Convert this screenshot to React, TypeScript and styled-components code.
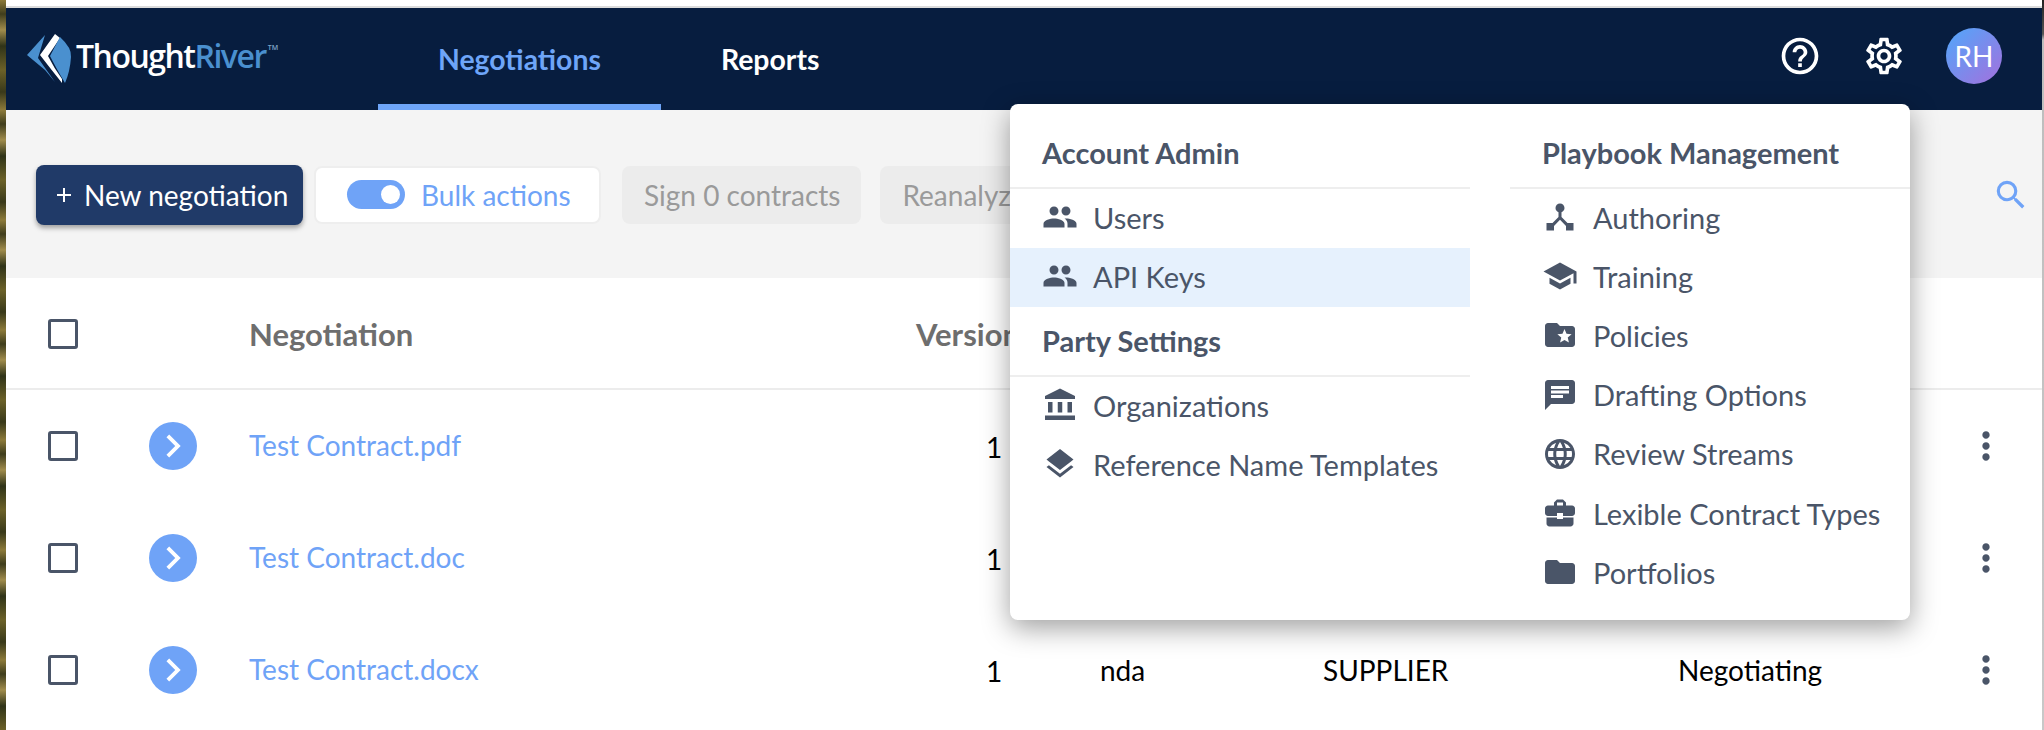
import styled, { createGlobalStyle } from 'styled-components';
import {
  MdAccountBalance,
  MdAdd,
  MdBusinessCenter,
  MdChat,
  MdChevronRight,
  MdDeviceHub,
  MdFolder,
  MdFolderSpecial,
  MdHelpOutline,
  MdLanguage,
  MdLayers,
  MdMoreVert,
  MdOutlineSettings,
  MdPeople,
  MdSchool,
  MdSearch,
} from 'react-icons/md';

const GlobalStyle = createGlobalStyle`
  html, body {
    margin: 0;
    padding: 0;
    background: #fff;
  }
  body {
    font-family: Lato, "Liberation Sans", sans-serif;
    font-size: 28px;
    color: #000;
  }
  * {
    box-sizing: border-box;
  }
`;

const Page = styled.div`
  position: relative;
  display: flex;
  width: 2044px;
  height: 730px;
  overflow: hidden;
`;

const Wallpaper = styled.div`
  flex: 0 0 6px;
  background: repeating-linear-gradient(
    180deg,
    #8c7a3a 0,
    #3f3d1c 14px,
    #a08c4c 30px,
    #2f3318 46px,
    #6b6128 70px,
    #39391a 92px,
    #8c7a3a 110px
  );
`;

const EdgeRight = styled.div`
  flex: 0 0 2px;
  background: linear-gradient(180deg, #222 0, #555 34px, #bdbdbd 40px, #c8c8c8 100%);
`;

const Shell = styled.div`
  flex: 1;
  display: flex;
  flex-direction: column;
  min-width: 0;
  background: #fff;
`;

const WindowTop = styled.div`
  flex: 0 0 8px;
  background: #fff;
  border-bottom: 2px solid #dcdcdc;
`;

const NavBar = styled.header`
  flex: 0 0 102px;
  display: flex;
  align-items: stretch;
  padding-left: 18px;
  background: #071d3f;
`;

const Logo = styled.div`
  flex: 0 0 354px;
  display: flex;
  align-items: flex-start;
  padding-top: 22px;

  svg {
    width: 50px;
    height: 56px;
    flex: none;
  }
`;

const LogoText = styled.span`
  margin: 6px 0 0 2px;
  font-family: "Open Sans", Lato, sans-serif;
  font-size: 32px;
  font-weight: 600;
  letter-spacing: -1.5px;
  line-height: 40px;
  color: #fff;

  b {
    font-weight: 600;
    color: #4a90cf;
  }

  sup {
    margin-left: 2px;
    font-size: 7px;
    line-height: 0;
    vertical-align: 18px;
    letter-spacing: 0;
    color: #7fa6c9;
  }
`;

const NavTab = styled.a<{ $active?: boolean }>`
  display: flex;
  align-items: center;
  height: 102px;
  padding: 6px 60px 0;
  font-size: 28.4px;
  font-weight: 700;
  color: ${(p) => (p.$active ? '#6ea5f8' : '#fff')};
  border-bottom: 6px solid ${(p) => (p.$active ? '#6ea5f8' : 'transparent')};
`;

const NavRight = styled.div`
  margin-left: auto;
  display: flex;
  align-items: center;
  height: 96px;
  padding-right: 40px;
  color: #fff;
`;

const NavIcon = styled.span`
  display: flex;
  margin-right: 40px;
  font-size: 44px;
`;

const Avatar = styled.div`
  display: flex;
  align-items: center;
  justify-content: center;
  width: 56px;
  height: 56px;
  border-radius: 50%;
  background: linear-gradient(135deg, #58a2f8 10%, #9c75e0 90%);
  color: #fff;
  font-size: 28px;
`;

const Toolbar = styled.div`
  flex: 0 0 168px;
  display: flex;
  align-items: center;
  padding: 1px 12px 0 30px;
  background: #f4f4f4;
`;

const PrimaryButton = styled.button`
  display: flex;
  align-items: center;
  width: 267px;
  height: 60px;
  margin-right: 11px;
  padding: 0 0 0 16px;
  border: 0;
  border-radius: 8px;
  background: #203a68;
  box-shadow: 0 3px 5px rgba(0, 0, 0, 0.35);
  color: #fff;
  font: 400 28px Lato, sans-serif;

  svg {
    margin-right: 8px;
    font-size: 24px;
  }
`;

const BulkToggle = styled.div`
  display: flex;
  align-items: center;
  width: 287px;
  height: 58px;
  margin-right: 21px;
  padding-left: 31px;
  border: 2px solid #eeeeee;
  border-radius: 8px;
  background: #fff;
  color: #6fa3f7;
`;

const SwitchTrack = styled.span`
  display: flex;
  align-items: center;
  justify-content: flex-end;
  width: 58px;
  height: 29px;
  margin-right: 16px;
  padding-right: 5px;
  border-radius: 15px;
  background: #6fa3f7;

  &::after {
    content: '';
    width: 19px;
    height: 19px;
    border-radius: 50%;
    background: #fff;
  }
`;

const DisabledButton = styled.div`
  display: flex;
  align-items: center;
  height: 58px;
  margin-right: 19px;
  padding: 0 21px 0 22px;
  border-radius: 8px;
  background: #ececec;
  color: #9a9a9a;
  white-space: nowrap;
`;

const SearchIcon = styled.span`
  display: flex;
  margin-left: auto;
  color: #6fa3f7;
  font-size: 38px;
`;

const Row = styled.div<{ $head?: boolean }>`
  display: grid;
  grid-template-columns: 101px 100px 667px 184px 223px 355px 286px 1fr;
  align-items: center;
  height: 112px;
  padding-left: 42px;
  padding-top: ${(p) => (p.$head ? '2px' : '0')};
  border-bottom: ${(p) => (p.$head ? '2px solid #ececec' : '0')};
`;

const Checkbox = styled.span`
  width: 30px;
  height: 30px;
  border: 3px solid #4a5568;
  border-radius: 3px;
`;

const Expand = styled.span`
  display: flex;
  align-items: center;
  justify-content: center;
  width: 48px;
  height: 48px;
  border-radius: 50%;
  background: #6fa3f7;
  color: #fff;
  font-size: 46px;
`;

const HeadCell = styled.div`
  font-size: 31px;
  font-weight: 700;
  color: #6e6e6e;
  white-space: nowrap;
`;

const FileLink = styled.a`
  display: block;
  padding-bottom: 2px;
  color: #6fa3f7;
`;

const VersionCell = styled.div`
  padding: 2px 0 0 70px;
`;

const BodyCell = styled.div`
  padding-bottom: 1px;
`;

const RowMenu = styled.span`
  display: flex;
  color: #4a5568;
  font-size: 44px;
`;

const Menu = styled.nav`
  position: absolute;
  top: 104px;
  left: 1010px;
  display: grid;
  grid-template-columns: 460px 400px;
  column-gap: 40px;
  width: 900px;
  height: 516px;
  border-radius: 8px;
  background: #fff;
  box-shadow: 0 8px 28px rgba(0, 0, 0, 0.38);
  color: #4a5568;
  font-size: 29px;
`;

const MenuHeading = styled.div<{ $first?: boolean }>`
  display: flex;
  align-items: center;
  height: ${(p) => (p.$first ? '85px' : '69.6px')};
  padding: ${(p) => (p.$first ? '14px 0 0 32px' : '0 0 1px 32px')};
  border-bottom: 2px solid #eeeeee;
  font-weight: 700;
`;

const MenuItem = styled.a<{ $selected?: boolean }>`
  display: flex;
  align-items: center;
  height: 59.2px;
  padding: 0 0 3px 32px;
  background: ${(p) => (p.$selected ? '#e6f1fd' : 'transparent')};
  white-space: nowrap;

  svg {
    flex: none;
    margin-right: 15px;
    font-size: 36px;
  }
`;

const adminItems = [
  { label: 'Users', icon: MdPeople },
  { label: 'API Keys', icon: MdPeople, selected: true },
];

const partyItems = [
  { label: 'Organizations', icon: MdAccountBalance },
  { label: 'Reference Name Templates', icon: MdLayers },
];

const playbookItems = [
  { label: 'Authoring', icon: MdDeviceHub },
  { label: 'Training', icon: MdSchool },
  { label: 'Policies', icon: MdFolderSpecial },
  { label: 'Drafting Options', icon: MdChat },
  { label: 'Review Streams', icon: MdLanguage },
  { label: 'Lexible Contract Types', icon: MdBusinessCenter },
  { label: 'Portfolios', icon: MdFolder },
];

const contracts = [
  { name: 'Test Contract.pdf' },
  { name: 'Test Contract.doc' },
  { name: 'Test Contract.docx', type: 'nda', party: 'SUPPLIER', status: 'Negotiating' },
];

const renderItems = (items: { label: string; icon: any; selected?: boolean }[]) =>
  items.map((item) => (
    <MenuItem key={item.label} $selected={item.selected}>
      <item.icon />
      {item.label}
    </MenuItem>
  ));

export default function App() {
  return (
    <>
      <GlobalStyle />
      <Page>
        <Wallpaper />
        <Shell>
          <WindowTop />
          <NavBar>
            <Logo>
              <svg viewBox="24 30 50 56">
                <path d="M45 35 L27 55 L45 70 L55 82 L38 58 Z" fill="#4a90cf" />
                <path d="M55 34 L40 55 Q50 68 62 83 L62 79 Q54 68 48 56 L60 38 Z" fill="#fff" />
                <path d="M60 37 Q72 48 71 57 Q70 72 65 83 Q56 68 50 56 Z" fill="#4a90cf" />
              </svg>
              <LogoText>
                Thought<b>River</b>
                <sup>TM</sup>
              </LogoText>
            </Logo>
            <NavTab $active>Negotiations</NavTab>
            <NavTab>Reports</NavTab>
            <NavRight>
              <NavIcon>
                <MdHelpOutline />
              </NavIcon>
              <NavIcon>
                <MdOutlineSettings />
              </NavIcon>
              <Avatar>RH</Avatar>
            </NavRight>
          </NavBar>

          <Toolbar>
            <PrimaryButton>
              <MdAdd />
              New negotiation
            </PrimaryButton>
            <BulkToggle>
              <SwitchTrack />
              Bulk actions
            </BulkToggle>
            <DisabledButton>Sign 0 contracts</DisabledButton>
            <DisabledButton>Reanalyze 0 contracts</DisabledButton>
            <SearchIcon>
              <MdSearch />
            </SearchIcon>
          </Toolbar>

          <Row $head>
            <Checkbox />
            <span />
            <HeadCell>Negotiation</HeadCell>
            <HeadCell>Version</HeadCell>
          </Row>

          {contracts.map((c) => (
            <Row key={c.name}>
              <Checkbox />
              <Expand>
                <MdChevronRight />
              </Expand>
              <FileLink>{c.name}</FileLink>
              <VersionCell>1</VersionCell>
              <BodyCell>{c.type}</BodyCell>
              <BodyCell>{c.party}</BodyCell>
              <BodyCell>{c.status}</BodyCell>
              <RowMenu>
                <MdMoreVert />
              </RowMenu>
            </Row>
          ))}
        </Shell>
        <EdgeRight />

        <Menu>
          <div>
            <MenuHeading $first>Account Admin</MenuHeading>
            {renderItems(adminItems)}
            <MenuHeading>Party Settings</MenuHeading>
            {renderItems(partyItems)}
          </div>
          <div>
            <MenuHeading $first>Playbook Management</MenuHeading>
            {renderItems(playbookItems)}
          </div>
        </Menu>
      </Page>
    </>
  );
}
